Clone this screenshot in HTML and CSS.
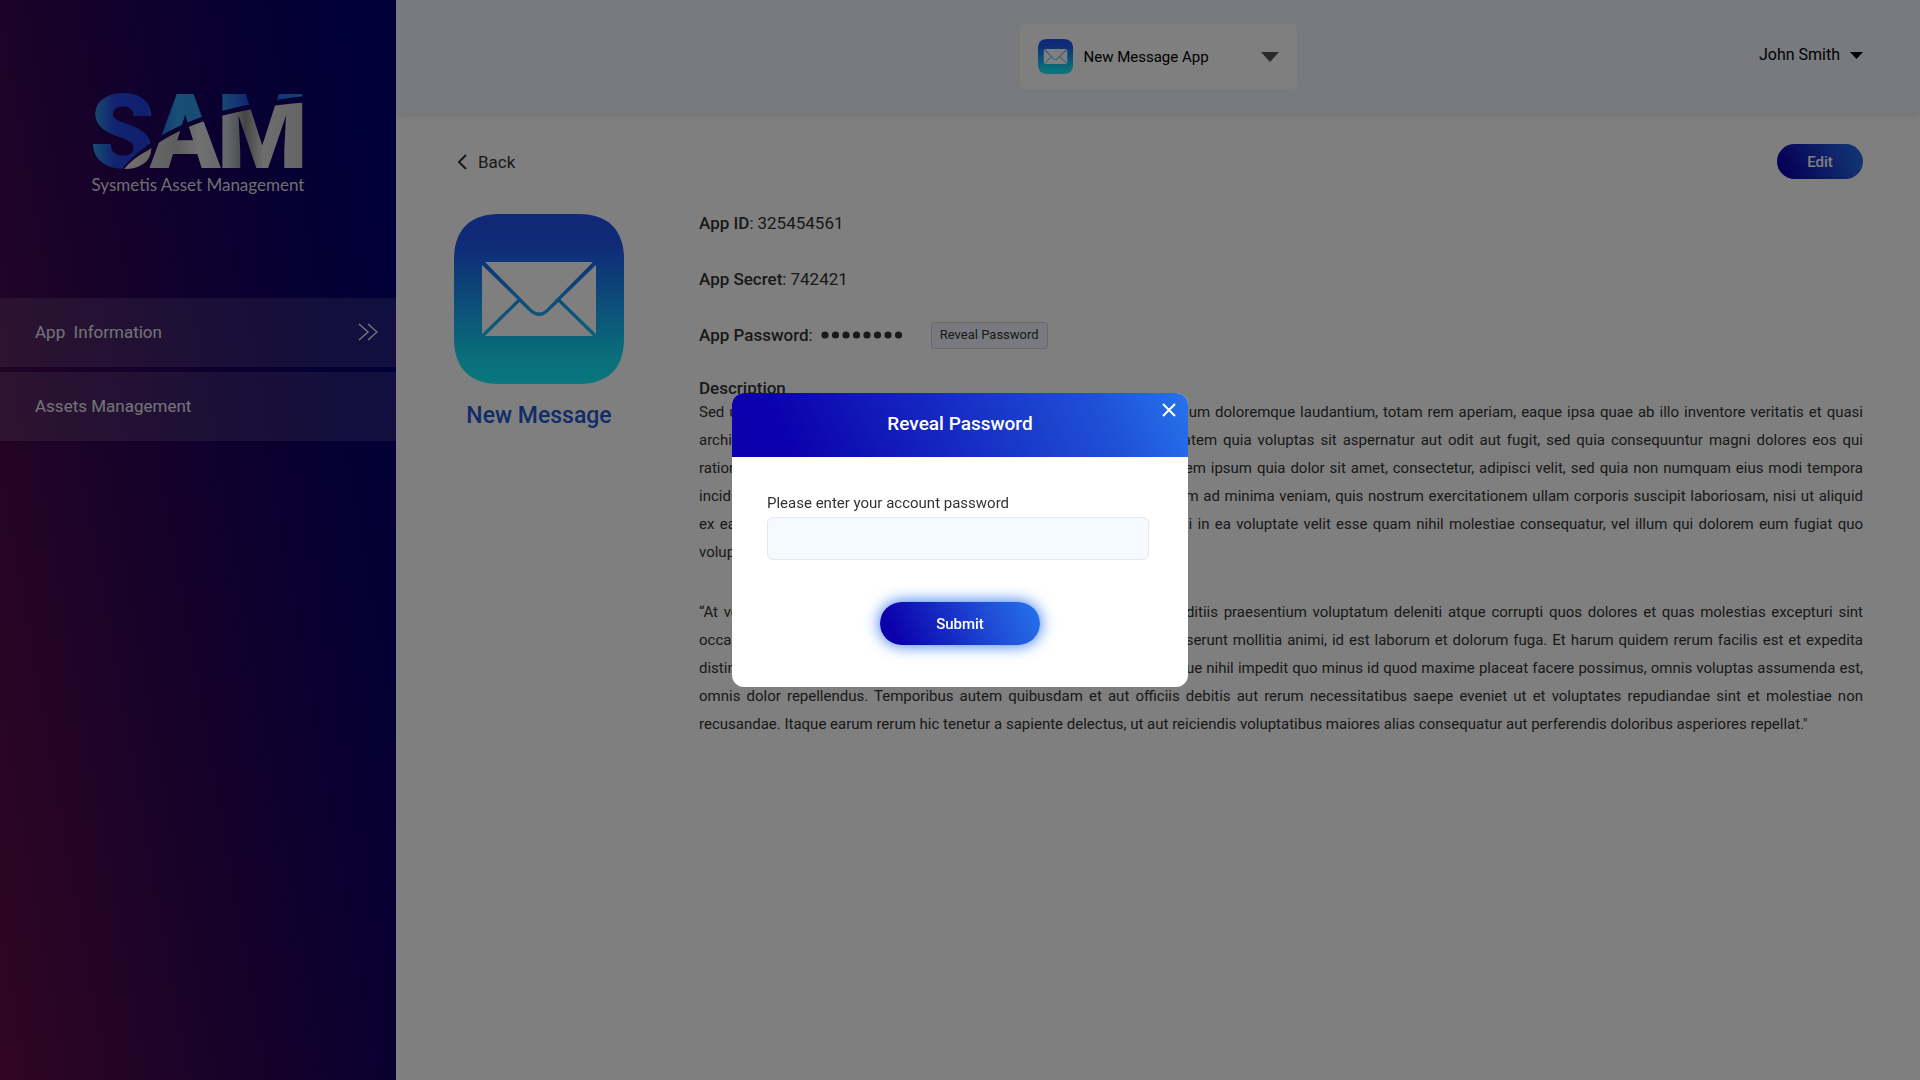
FILE: index.html
```html
<!DOCTYPE html>
<html lang="en">
<head>
<meta charset="utf-8">
<meta name="viewport" content="width=device-width, initial-scale=1">
<title>SAM – App Information</title>
<link rel="stylesheet" href="styles.css">
</head>
<body>
<svg class="defs" aria-hidden="true">
  <defs>
    <linearGradient id="mail-bg" x1="0" y1="0" x2="0" y2="1">
      <stop offset="0" stop-color="#2050ee"/>
      <stop offset="0.2" stop-color="#1e58f0"/>
      <stop offset="0.85" stop-color="#14e0f4"/>
      <stop offset="1" stop-color="#14ecfc"/>
    </linearGradient>
  </defs>
  <symbol id="mail" viewBox="0 0 170 170">
    <path fill="url(#mail-bg)" d="M45 0H125C155 0 170 17 170 45V125C170 155 153 170 125 170H45C15 170 0 153 0 125V45C0 15 17 0 45 0Z"/>
    <g fill="#fff">
      <path d="M31 48H139L92 95.500Q85 101.500 78 95.500Z"/>
      <path d="M28 51L63.500 85.500L28 120Z"/>
      <path d="M142 51L106.500 85.500L142 120Z"/>
      <path d="M31 122L65.500 88L76 98Q85 106 94 98L104.500 88L139 122Z"/>
    </g>
  </symbol>
</svg>

<div class="layout">
  <aside class="sidebar">
    <div class="brand">
      <svg class="brand-mark" viewBox="68 68 634 228" role="img" aria-label="SAM">
        <defs>
          <linearGradient id="blue" gradientUnits="userSpaceOnUse" x1="70" y1="0" x2="700" y2="0">
            <stop offset="0" stop-color="#2f9be0"/><stop offset="0.1" stop-color="#2448e0"/>
            <stop offset="0.25" stop-color="#1f3fe0"/><stop offset="0.4" stop-color="#2f9fea"/>
            <stop offset="0.62" stop-color="#2f90e6"/><stop offset="0.76" stop-color="#1f40e0"/>
            <stop offset="1" stop-color="#2f90e6"/>
          </linearGradient>
          <linearGradient id="silver" gradientUnits="userSpaceOnUse" x1="160" y1="0" x2="700" y2="0">
            <stop offset="0" stop-color="#e2e2e2"/><stop offset="0.3" stop-color="#bcbcbc"/>
            <stop offset="0.42" stop-color="#e2e2e2"/><stop offset="0.58" stop-color="#c8ccd8"/>
            <stop offset="0.68" stop-color="#8c8c8c"/><stop offset="0.78" stop-color="#dcdcdc"/>
            <stop offset="1" stop-color="#c8c8c8"/>
          </linearGradient>
          <clipPath id="above"><path d="M60 60H710V76Q560 94 440 126Q300 168 222 234Q185 262 152 300H60Z"/></clipPath>
          <clipPath id="below"><path d="M160 300Q190 262 236 240Q310 180 440 140Q560 108 710 96V300Z"/></clipPath>
        </defs>
        <g class="brand-letters brand-blue" clip-path="url(#above)" aria-hidden="true">
          <text x="60" y="293">S</text><text x="240" y="293">A</text><text x="441" y="293">M</text>
        </g>
        <g class="brand-letters brand-silver" clip-path="url(#below)" aria-hidden="true">
          <text x="60" y="293">S</text><text x="240" y="293">A</text><text x="441" y="293">M</text>
        </g>
      </svg>
      <p class="tagline">Sysmetis Asset Management</p>
    </div>
    <nav class="nav">
      <a class="nav-item" href="#information" aria-current="page">App&nbsp; Information
        <svg width="20" height="18" viewBox="0 0 20 18" fill="none" stroke="currentColor" stroke-width="1.500"><path d="M1 1L10 9L1 17M10 1L19 9L10 17"/></svg>
      </a>
      <a class="nav-item" href="#assets">Assets Management</a>
    </nav>
  </aside>

  <div class="page">
    <header class="topbar">
      <div class="app-picker">
        <svg class="picker-icon" aria-hidden="true"><use href="#mail"/></svg>
        <select class="picker-select" aria-label="Application"><option>New Message App</option></select>
        <svg class="picker-arrow" width="18" height="10" viewBox="0 0 18 10" aria-hidden="true"><path d="M0 0H18L9 10Z"/></svg>
      </div>
      <button class="user-menu" type="button">John Smith
        <svg width="13" height="7" viewBox="0 0 13 7" aria-hidden="true"><path d="M0 0H13L6.500 7Z"/></svg>
      </button>
    </header>

    <main class="content">
      <div class="toolbar">
        <a class="back" href="#back">
          <svg width="10" height="16" viewBox="0 0 10 16" fill="none" stroke="currentColor" stroke-width="2"><path d="M9 1L2 8L9 15"/></svg>
          Back</a>
        <button class="btn btn-edit" type="button">Edit</button>
      </div>
      <div class="details">
        <div class="app-card">
          <svg class="app-icon" aria-hidden="true"><use href="#mail"/></svg>
          <h1 class="app-name">New Message</h1>
        </div>
        <div class="info">
          <dl class="fields">
            <div class="field"><dt><b>App ID</b>:</dt><dd>325454561</dd></div>
            <div class="field"><dt><b>App Secret</b>:</dt><dd>742421</dd></div>
            <div class="field"><dt><b>App Password</b>:</dt>
              <dd class="masked">
                <svg width="82" height="8" viewBox="0 0 82 8" role="img" aria-label="Hidden password"><g fill="currentColor"><circle cx="4" cy="4" r="3.600"/><circle cx="14.500" cy="4" r="3.600"/><circle cx="25" cy="4" r="3.600"/><circle cx="35.500" cy="4" r="3.600"/><circle cx="46" cy="4" r="3.600"/><circle cx="56.500" cy="4" r="3.600"/><circle cx="67" cy="4" r="3.600"/><circle cx="77.500" cy="4" r="3.600"/></g></svg>
                <button class="btn-reveal" type="button">Reveal Password</button>
              </dd>
            </div>
          </dl>
          <h2 class="section-title">Description</h2>
          <div class="description">
            <p>Sed ut perspiciatis unde omnis iste natus error sit voluptatem accusantium doloremque laudantium, totam rem aperiam, eaque ipsa quae ab illo inventore veritatis et quasi architecto beatae vitae dicta sunt explicabo. Nemo enim ipsam voluptatem quia voluptas sit aspernatur aut odit aut fugit, sed quia consequuntur magni dolores eos qui ratione&nbsp;voluptatem sequi nesciunt. Neque porro quisquam est, qui dolorem ipsum quia dolor sit amet, consectetur, adipisci velit, sed quia non numquam eius modi tempora incidunt&nbsp;ut&nbsp;labore et dolore magnam aliquam quaerat voluptatem. Ut enim ad minima veniam, quis nostrum exercitationem ullam corporis suscipit laboriosam, nisi ut aliquid ex&nbsp;ea&nbsp;commodi consequatur? Quis autem vel eum iure reprehenderit qui in ea voluptate velit esse quam nihil molestiae consequatur, vel illum qui dolorem eum fugiat quo voluptas&nbsp;nulla pariatur?</p>
            <p>“At vero eos et accusamus et iusto odio dignissimos ducimus qui blanditiis praesentium voluptatum deleniti atque corrupti quos dolores et quas molestias excepturi sint occaecati cupiditate non provident, similique sunt in culpa qui officia deserunt mollitia animi, id est laborum et dolorum fuga. Et harum quidem rerum facilis est et expedita distinctio. Nam libero tempore, cum soluta nobis est eligendi optio cumque nihil impedit quo minus id quod maxime placeat facere possimus, omnis voluptas assumenda est, omnis dolor repellendus. Temporibus autem quibusdam et aut officiis debitis aut rerum necessitatibus saepe eveniet ut et voluptates repudiandae sint et molestiae non recusandae. Itaque earum rerum hic tenetur a sapiente delectus, ut aut reiciendis voluptatibus maiores alias consequatur aut perferendis doloribus asperiores repellat."</p>
          </div>
        </div>
      </div>
    </main>
  </div>
</div>

<div class="overlay">
  <div class="modal" role="dialog" aria-modal="true" aria-labelledby="modal-title">
    <div class="modal-head">
      <h2 class="modal-title" id="modal-title">Reveal Password</h2>
      <button class="modal-close" type="button" aria-label="Close">
        <svg width="14" height="14" viewBox="0 0 14 14" fill="none" stroke="currentColor" stroke-width="2"><path d="M1 1L13 13M13 1L1 13"/></svg>
      </button>
    </div>
    <form class="modal-body">
      <label class="modal-label" for="account-password">Please enter your account password</label>
      <input class="modal-input" id="account-password" type="password">
      <button class="btn btn-submit" type="submit">Submit</button>
    </form>
  </div>
</div>
</body>
</html>
```
FILE: styles.css
```css
* { box-sizing: border-box; }

body {
  margin: 0;
  background: #fff;
  color: #333;
  font-family: Roboto, "Liberation Sans", sans-serif;
  font-size: 17px;
  line-height: 20px;
}

h1, h2, p, dl, dd { margin: 0; }
button, select, input { font: inherit; color: inherit; }
button { border: 0; padding: 0; background: none; cursor: pointer; }
svg { display: block; flex: none; }
a { color: inherit; text-decoration: none; }

.defs { position: absolute; width: 0; height: 0; }

.layout {
  display: grid;
  grid-template-columns: 396px minmax(0, 1fr);
  min-height: 100vh;
}

/* Sidebar */
.sidebar {
  background: linear-gradient(80deg, #620c46 0%, #38064e 32%, #16005e 64%, #000070 92%);
  color: #fff;
}

.brand {
  display: flex;
  flex-direction: column;
  align-items: center;
  gap: 8px;
  height: 298px;
  padding-top: 93px;
}
.brand-mark { width: 212px; height: 76px; overflow: visible; }
.brand-letters { font-size: 312px; font-weight: 900; }
.brand-blue { fill: url(#blue); }
.brand-silver { fill: url(#silver); }
.tagline {
  color: #ddd;
  font-family: Lato, sans-serif;
  font-size: 17px;
  line-height: 16px;
}

.nav { display: grid; gap: 5px; }
.nav-item {
  display: flex;
  align-items: center;
  justify-content: space-between;
  height: 69px;
  padding: 0 18px 2px 35px;
  background: rgba(255, 255, 255, .12);
  color: #e6e6f0;
}

/* Top bar */
.topbar {
  display: grid;
  grid-template-columns: 1fr 277px 1fr;
  align-items: center;
  height: 113px;
  padding: 0 57px;
  background: #f3f5fe;
  box-shadow: 0 2px 8px rgba(0, 0, 0, .12);
  color: #000;
}
.app-picker {
  grid-column: 2;
  display: flex;
  align-items: center;
  gap: 11px;
  height: 65px;
  padding: 0 18px;
  border-radius: 6px;
  background: #fff;
}
.picker-icon { width: 35px; height: 35px; }
.picker-select {
  flex: 1;
  min-width: 0;
  padding: 0;
  border: 0;
  background: none;
  appearance: none;
  font-size: 15px;
}
.picker-arrow { fill: #555; }
.user-menu {
  display: flex;
  align-items: center;
  justify-self: end;
  gap: 10px;
  padding-bottom: 3px;
  font-size: 16px;
}

/* Content */
.content { padding: 31px 57px 57px 58px; }
.toolbar {
  display: flex;
  align-items: center;
  justify-content: space-between;
  height: 35px;
}
.back { display: flex; align-items: center; gap: 11px; padding-left: 3px; }

.btn {
  border-radius: 22px;
  background: linear-gradient(65deg, #0b00ac 10%, #2050d8 70%, #2674ec 100%);
  color: #fff;
  font-size: 15px;
  font-weight: 500;
}
.btn-edit { width: 86px; height: 35px; }

.details {
  display: grid;
  grid-template-columns: 170px minmax(0, 1fr);
  gap: 75px;
  padding-top: 35px;
}
.app-icon { width: 170px; height: 170px; }
.app-name {
  margin-top: 20px;
  color: #2558d0;
  font-size: 23px;
  font-weight: 500;
  line-height: 24px;
  text-align: center;
  white-space: nowrap;
}

.info { margin-top: -1px; }
.fields { display: grid; gap: 36px; }
.field { display: flex; align-items: center; gap: 4px; height: 20px; }
.field b, .section-title { font-size: 17px; font-weight: 500; }
.masked { display: flex; align-items: center; gap: 28px; padding-left: 4px; }
.btn-reveal {
  width: 117px;
  height: 27px;
  border: 1px solid #d0d2dc;
  border-radius: 3px;
  background: #f3f5fe;
  font-size: 13px;
}
.section-title { margin-top: 33px; line-height: 20px; }
.description {
  display: grid;
  gap: 32px;
  font-size: 15px;
  line-height: 28px;
  text-align: justify;
}

/* Dialog */
.overlay {
  position: fixed;
  inset: 0;
  display: flex;
  align-items: center;
  justify-content: center;
  background: rgba(0, 0, 0, .5);
}
.modal {
  width: 456px;
  overflow: hidden;
  border-radius: 12px;
  background: #fff;
}
.modal-head {
  position: relative;
  display: flex;
  align-items: center;
  justify-content: center;
  height: 64px;
  padding-bottom: 2px;
  background: linear-gradient(65deg, #0b00ac 12%, #1f50d6 80%, #2674ec 100%);
  color: #fff;
}
.modal-title { font-size: 19px; font-weight: 500; }
.modal-close { position: absolute; top: 10px; right: 12px; }
.modal-body {
  display: flex;
  flex-direction: column;
  padding: 36px 35px 42px;
}
.modal-label { font-size: 15px; line-height: 20px; }
.modal-input {
  height: 43px;
  margin: 4px 4px 0 0;
  padding: 0 12px;
  border: 1px solid #e4e6e8;
  border-radius: 6px;
  background: #f4faff;
}
.btn-submit {
  align-self: center;
  width: 160px;
  height: 43px;
  margin-top: 42px;
  box-shadow: 0 0 16px #2670ee;
}
```
